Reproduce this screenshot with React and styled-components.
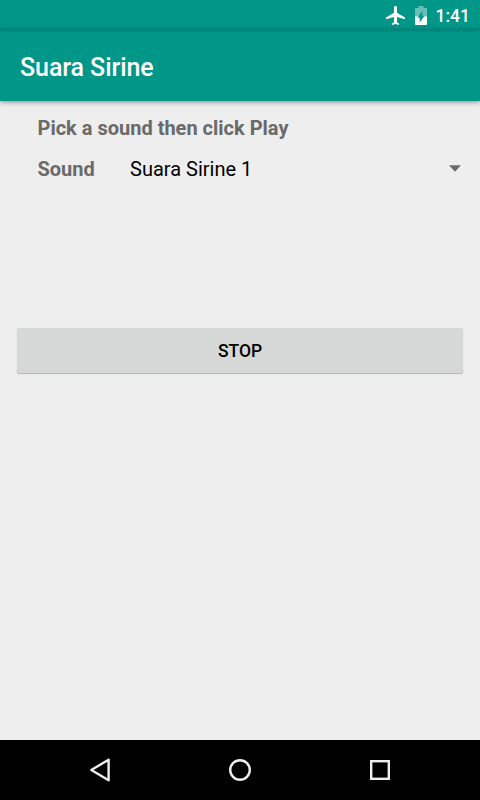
import React from 'react';
import styled, { createGlobalStyle } from 'styled-components';

const GlobalStyle = createGlobalStyle`
  * { box-sizing: border-box; }
  body { margin: 0; font-family: Roboto, sans-serif; background: #eeeeee; }
`;
const Screen = styled.div`
  width: 480px;
  height: 800px;
  display: flex;
  flex-direction: column;
  background: #eeeeee;
  overflow: hidden;
`;
const StatusBar = styled.div`
  flex: none;
  height: 30px;
  display: flex;
  justify-content: flex-end;
  align-items: center;
  padding: 2px 10px 0 0;
  background: #009688;
  color: #fff;
`;
const StatusIcon = styled.svg`
  display: block;
  flex: none;
  margin: 0 ${(p) => p.$gap}px 1px 0;
`;
const Clock = styled.span`
  font-size: 17.5px;
  line-height: 28px;
  font-weight: 500;
`;
const AppBar = styled.header`
  flex: none;
  height: 71px;
  display: flex;
  align-items: center;
  padding: 4px 20px 0;
  background: #009688;
  box-shadow: inset 0 2px 2px -1px rgba(0, 0, 0, 0.14), 0 1px 5px rgba(0, 0, 0, 0.45);
`;
const Title = styled.h1`
  margin: 0;
  color: #fff;
  font-size: 25px;
  letter-spacing: -0.08px;
  line-height: 30px;
  font-weight: 500;
`;
const Content = styled.main`
  flex: 1;
  display: flex;
  flex-direction: column;
  padding-top: 15px;
`;
const Prompt = styled.p`
  margin: 0 0 0 37.5px;
  color: #6a6a6a;
  font-size: 20px;
  line-height: 24px;
  font-weight: 700;
`;
const SoundRow = styled.div`
  display: flex;
  align-items: center;
  margin-top: 17px;
  padding: 0 19px 0 37.5px;
  font-size: 20px;
  line-height: 24px;
`;
const Label = styled.span`
  width: 92.5px;
  color: #6a6a6a;
  font-weight: 700;
`;
const Spinner = styled.div`
  flex: 1;
  display: flex;
  justify-content: space-between;
  align-items: center;
  color: #000;
`;
const Arrow = styled.svg`
  display: block;
  margin-bottom: 2px;
`;
const StopButton = styled.button`
  height: 45px;
  margin: 147px 17px 0;
  padding: 1px 0 0;
  border: 0;
  border-radius: 3px;
  background: #d6d7d7;
  box-shadow: 0 1px 1px rgba(0, 0, 0, 0.25);
  color: #000;
  font-family: inherit;
  font-size: 17.5px;
  font-weight: 500;
`;
const NavBar = styled.nav`
  flex: none;
  height: 60px;
  display: flex;
  align-items: center;
  justify-content: center;
  gap: 110px;
  background: #000;
`;
const NavIcon = styled.svg`
  display: block;
  width: 30px;
  height: 30px;
  fill: none;
  stroke: #eee;
  stroke-width: 2.4;
  stroke-linejoin: ${(p) => p.$join || 'miter'};
`;

export default function App() {
  return (
    <>
      <GlobalStyle />
      <Screen>
        <StatusBar>
          <StatusIcon $gap={10} width="19" height="19" viewBox="2 2 19 20" preserveAspectRatio="none" fill="#fff">
            <path d="M21 16v-2l-8-5V3.500c0-.83-.67-1.500-1.500-1.500S10 2.670 10 3.500V9l-8 5v2l8-2.500V19l-2 1.500V22l3.500-1 3.500 1v-1.500L13 19v-5.500l8 2.500z" />
          </StatusIcon>
          <StatusIcon $gap={9} width="12" height="19" viewBox="0 0 12 19">
            <path fill="#fff" fillOpacity=".4" d="M3.500 0h5v2H11q1 0 1 1v8H0V3q0-1 1-1h2.500z" />
            <path fill="#fff" d="M0 10.500h12V18q0 1-1 1H1q-1 0-1-1z" />
            <path fill="#009688" d="M7.300 5v4.800h2.200L4.700 16.500v-4.700H2.500z" />
          </StatusIcon>
          <Clock>1:41</Clock>
        </StatusBar>
        <AppBar><Title>Suara Sirine</Title></AppBar>
        <Content>
          <Prompt>Pick a sound then click Play</Prompt>
          <SoundRow>
            <Label>Sound</Label>
            <Spinner>
              Suara Sirine 1
              <Arrow width="12" height="7" viewBox="0 0 12 7"><path d="M0 .3h12L6 6.800z" fill="#6a6a6a" /></Arrow>
            </Spinner>
          </SoundRow>
          <StopButton type="button">STOP</StopButton>
        </Content>
        <NavBar>
          <NavIcon $join="round"><path d="M23.600 4.700v20.600L6.300 15z" /></NavIcon>
          <NavIcon><circle cx="15" cy="15" r="9.800" /></NavIcon>
          <NavIcon><rect x="6.200" y="6.200" width="17.600" height="17.600" /></NavIcon>
        </NavBar>
      </Screen>
    </>
  );
}
